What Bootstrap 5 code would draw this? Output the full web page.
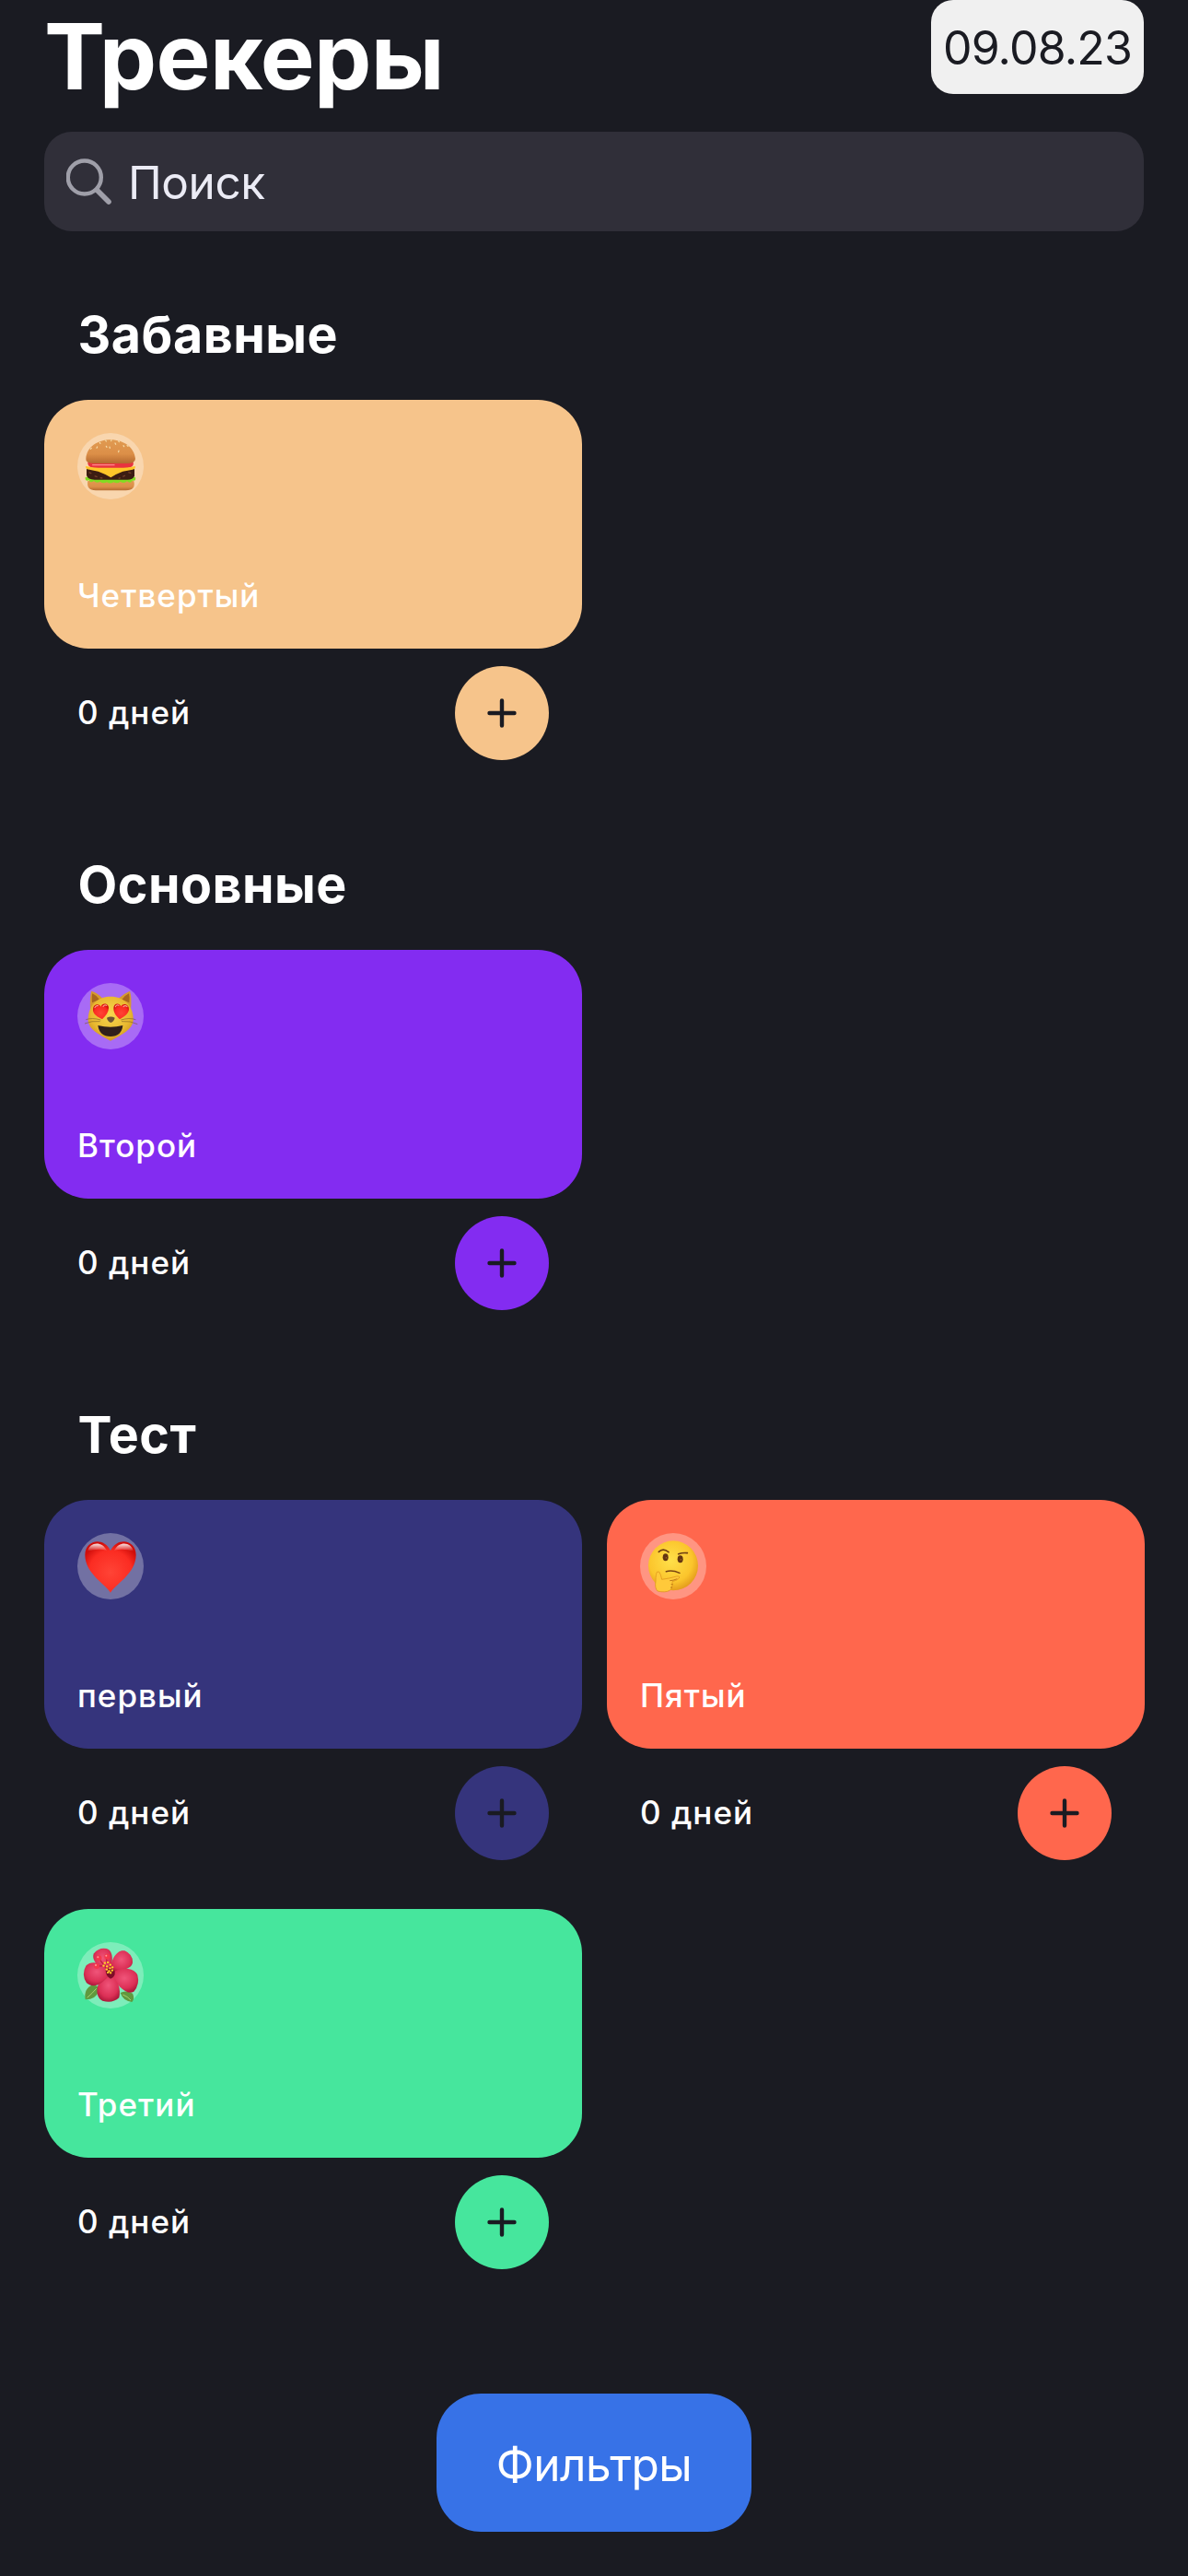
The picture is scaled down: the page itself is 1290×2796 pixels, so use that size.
<!DOCTYPE html>
<html lang="ru" data-bs-theme="dark">
<head>
<meta charset="utf-8">
<meta name="viewport" content="width=device-width, initial-scale=1">
<title>Трекеры</title>
<link href="https://cdn.jsdelivr.net/npm/bootstrap@5.3.0/dist/css/bootstrap.min.css" rel="stylesheet">
<style>
  body { background: #1a1b22; color: #fff; font-family: Inter, "Liberation Sans", sans-serif; }
  .screen { height: 2796px; padding: 0 47px 48px 48px; }
  .top-bar { height: 143px; }
  .page-title { font-size: 99px; line-height: 122px; font-weight: 700; letter-spacing: -.65px; }
  .date-pill { width: 231px; height: 102px; margin-right: 1px; border-radius: 24px; background: #f0f0f0; color: #1a1b22; font-size: 50px; letter-spacing: -.8px; padding-top: 2px; }
  .search-box { height: 108px; margin-right: 1px; border-radius: 30px; background: #302f39; color: #ebebf5; padding: 0 24px; font-size: 49.5px; letter-spacing: -.45px; }
  .search-box svg { width: 50px; height: 50px; }
  .search-box span { margin-left: 17px; padding-top: 2px; }
  .tracker-section { margin-top: 102px; }
  .search-box + .tracker-section { margin-top: 79px; }
  .section-title { font-size: 55.5px; line-height: 66px; font-weight: 700; letter-spacing: .5px; margin: 0 0 38px 36.5px; }
  .tracker-grid { --bs-gutter-x: 27px; --bs-gutter-y: 53px; }
  .tracker-tile { height: 270px; border-radius: 48px; padding: 36px 36px 31px; background: var(--tint); }
  .emoji { width: 72px; height: 72px; background: rgba(255,255,255,.3); }
  .emoji svg { width: 72px; height: 72px; display: block; }
  .tile-name, .day-count { font-size: 35px; line-height: 54px; font-weight: 500; letter-spacing: 1px; }
  .day-count { padding-bottom: 2px; }
  .tile-foot { margin-top: 19px; padding: 0 36px; }
  .plus-btn { width: 102px; height: 102px; background: var(--tint); color: #1a1b22; }
  .plus-btn svg { width: 34px; height: 34px; }
  .filter-btn { width: 342px; height: 150px; margin-right: 1px; border-radius: 48px; background: #3772e7; color: #fff; font-size: 49.5px; letter-spacing: -.5px; }
  .tint-sand { --tint: #f6c48b; }
  .tint-violet { --tint: #832cf1; }
  .tint-navy { --tint: #35347c; }
  .tint-coral { --tint: #ff674d; }
  .tint-mint { --tint: #46e69d; }
</style>
</head>
<body>
<svg width="0" height="0" class="position-absolute">
  <defs>
    <symbol id="plus" viewBox="0 0 34 34"><path d="M17 3.5v27M3.5 17h27" stroke="currentColor" stroke-width="4.4" stroke-linecap="round" fill="none"/></symbol>
    <linearGradient id="bun" x1="0" y1="0" x2="0" y2="1"><stop offset="0" stop-color="#e09a50"/><stop offset=".6" stop-color="#dc8f48"/><stop offset="1" stop-color="#b4692f"/></linearGradient>
    <radialGradient id="face" cx=".45" cy=".4" r=".62"><stop offset="0" stop-color="#ffe04a"/><stop offset=".7" stop-color="#fbc52c"/><stop offset="1" stop-color="#e39a1b"/></radialGradient>
    <radialGradient id="catface" cx=".5" cy=".4" r=".6"><stop offset="0" stop-color="#f7d84e"/><stop offset=".7" stop-color="#e9b930"/><stop offset="1" stop-color="#cf9720"/></radialGradient>
    <radialGradient id="red" cx=".5" cy=".6" r=".6"><stop offset="0" stop-color="#ff4436"/><stop offset=".7" stop-color="#fb2c22"/><stop offset="1" stop-color="#cf0d0a"/></radialGradient>
    <linearGradient id="shine" x1="0" y1="0" x2="0" y2="1"><stop offset="0" stop-color="#fff" stop-opacity=".9"/><stop offset="1" stop-color="#fff" stop-opacity="0"/></linearGradient>
    <radialGradient id="petal" cx=".5" cy=".4" r=".6"><stop offset="0" stop-color="#f0557a"/><stop offset=".7" stop-color="#dc3056"/><stop offset="1" stop-color="#b01a3c"/></radialGradient>
  </defs>
</svg>

<main class="screen d-flex flex-column">
  <header class="top-bar d-flex justify-content-between align-items-start">
    <h1 class="page-title mb-0">Трекеры</h1>
    <div class="date-pill d-flex align-items-center justify-content-center">09.08.23</div>
  </header>

  <div class="search-box d-flex align-items-center">
    <svg viewBox="0 0 50 50" fill="none" stroke="#9f9fa9" stroke-linecap="round"><circle cx="19.8" cy="20.5" r="18" stroke-width="4.4"/><path d="M33.5 34.5L46 47" stroke-width="5.6"/></svg>
    <span>Поиск</span>
  </div>

  <section class="tracker-section">
    <h2 class="section-title">Забавные</h2>
    <div class="row tracker-grid">
      <div class="col-6 tint-sand">
        <div class="tracker-tile d-flex flex-column justify-content-between">
          <div class="emoji rounded-circle">
            <svg viewBox="42 30 216 216">
              <path d="M76 186H226Q234 216 200 217H102Q70 216 76 186Z" fill="url(#bun)"/>
              <path d="M68 174Q150 160 231 174Q234 188 221 185Q214 196 204 187Q194 197 182 188Q172 197 160 190Q148 197 138 190Q126 196 116 188Q104 195 96 186Q84 194 80 184Q66 188 68 174Z" fill="#83dc22"/>
              <path d="M72 146H228V170Q222 184 200 182H98Q76 182 72 168Z" fill="#3c1d12"/>
              <path d="M80 158l8 4M98 170l9 3M190 172l8-4M208 158l9 3M116 176l8 1M176 178l6-2" stroke="#75402a" stroke-width="4"/>
              <path d="M76 124H224Q228 142 206 144H96Q74 142 76 124Z" fill="#e8343f"/><path d="M92 134h70" stroke="#ff8a8a" stroke-width="4" stroke-linecap="round"/>
              <path d="M70 138Q90 143 110 143H192Q212 143 230 138Q234 147 222 149L190 155Q170 162 151 175Q130 162 110 155L74 148Q66 142 70 138Z" fill="#ffc629"/>
              <path d="M70 114C72 76 108 52 150 52C194 52 228 78 231 114Q230 129 205 129H95Q68 128 70 114Z" fill="url(#bun)"/>
              <path d="M115 61l2 3M134 54l2 3M153 53l-1 3M176 56l2 3M107 75l-2 4M136 73l2 3M147 75l1 4M165 63l2 4M192 71l2 3M177 87l-1 5M88 79l-3 3M204 70l3 3" stroke="#f6dca8" stroke-width="3.6" stroke-linecap="round"/>
            </svg>
          </div>
          <div class="tile-name">Четвертый</div>
        </div>
        <div class="tile-foot d-flex justify-content-between align-items-center">
          <span class="day-count">0 дней</span>
          <button type="button" class="plus-btn btn border-0 rounded-circle p-0 d-flex align-items-center justify-content-center"><svg><use href="#plus"/></svg></button>
        </div>
      </div>
    </div>
  </section>

  <section class="tracker-section">
    <h2 class="section-title">Основные</h2>
    <div class="row tracker-grid">
      <div class="col-6 tint-violet">
        <div class="tracker-tile d-flex flex-column justify-content-between">
          <div class="emoji rounded-circle">
            <svg viewBox="42 36 216 216">
              <path d="M84 122Q82 80 88 62Q108 68 124 86H176Q194 70 213 62Q220 82 216 122Z" fill="#d59a30"/>
              <path d="M90 100Q88 80 91 70Q104 76 114 90ZM211 100Q213 82 210 70Q197 76 187 90Z" fill="#a8661f"/>
              <path d="M150 80C196 80 226 112 224 158C222 186 188 204 150 224C112 204 78 186 77 158C76 112 104 80 150 80Z" fill="url(#catface)"/>
              <path d="M109 174Q150 184 190 174Q186 210 150 210Q114 210 109 174Z" fill="#30201a"/>
              <path d="M138 149Q151 142 164 149Q162 160 151 165Q140 160 138 149Z" fill="#6e5434"/>
              <path d="M118 156Q90 148 70 155M116 161Q88 158 66 168M184 156Q212 148 232 155M186 161Q214 158 238 170" fill="none" stroke="#7c5c28" stroke-width="2.5" opacity=".75"/>
              <path d="M123 154C98 142 92 132 93 120C94 105 112 101 118 113C124 98 145 102 144 118C143 132 136 142 123 154Z" fill="url(#red)"/>
              <path d="M180 154C166 142 160 132 160 118C160 102 178 98 184 112C192 99 210 106 210 121C210 134 198 144 180 154Z" fill="url(#red)"/>
              <path d="M99 116q3-8 10-6M126 112q5-7 11-3M166 113q4-8 11-4M192 113q6-6 12 0" fill="none" stroke="#ff9e8e" stroke-width="3.5" stroke-linecap="round"/>
            </svg>
          </div>
          <div class="tile-name">Второй</div>
        </div>
        <div class="tile-foot d-flex justify-content-between align-items-center">
          <span class="day-count">0 дней</span>
          <button type="button" class="plus-btn btn border-0 rounded-circle p-0 d-flex align-items-center justify-content-center"><svg><use href="#plus"/></svg></button>
        </div>
      </div>
    </div>
  </section>

  <section class="tracker-section">
    <h2 class="section-title">Тест</h2>
    <div class="row tracker-grid">
      <div class="col-6 tint-navy">
        <div class="tracker-tile d-flex flex-column justify-content-between">
          <div class="emoji rounded-circle">
            <svg viewBox="42 27 216 216">
              <path d="M150 221C138 196 67 160 67 98C67 48 128 38 150 84C172 38 233 48 233 98C233 160 162 196 150 221Z" fill="url(#red)"/>
              <path d="M76 86C82 56 122 52 138 84Q110 76 76 86ZM162 84C178 52 218 56 224 86Q190 76 162 84Z" fill="url(#shine)"/>
            </svg>
          </div>
          <div class="tile-name">первый</div>
        </div>
        <div class="tile-foot d-flex justify-content-between align-items-center">
          <span class="day-count">0 дней</span>
          <button type="button" class="plus-btn btn border-0 rounded-circle p-0 d-flex align-items-center justify-content-center"><svg><use href="#plus"/></svg></button>
        </div>
      </div>
      <div class="col-6 tint-coral">
        <div class="tracker-tile d-flex flex-column justify-content-between">
          <div class="emoji rounded-circle">
            <svg viewBox="45 27 216 216">
              <circle cx="153" cy="133" r="81" fill="url(#face)"/>
              <path d="M106 88Q120 74 138 89" fill="none" stroke="#6e3d12" stroke-width="5" stroke-linecap="round"/>
              <path d="M170 95Q184 90 199 92" fill="none" stroke="#6e3d12" stroke-width="5" stroke-linecap="round"/>
              <ellipse cx="128" cy="106" rx="9" ry="12" fill="#633411"/><ellipse cx="176" cy="112" rx="9" ry="12" fill="#633411"/>
              <path d="M130 105v5M178 111v5" stroke="#a0652a" stroke-width="3"/>
              <path d="M130 152Q150 146 174 157" fill="none" stroke="#7a4512" stroke-width="4.5" stroke-linecap="round"/>
              <path d="M101 153Q108 149 112 163L116 178Q140 175 164 168Q176 166 172 174Q168 180 150 185Q152 206 142 214Q126 222 102 216Q92 206 96 184Q96 158 101 153Z" fill="#ffc93a" stroke="#d98e18" stroke-width="2"/>
              <path d="M142 182Q152 182 166 176M146 194h6M144 204h6" fill="none" stroke="#b06a12" stroke-width="2.5"/>
            </svg>
          </div>
          <div class="tile-name">Пятый</div>
        </div>
        <div class="tile-foot d-flex justify-content-between align-items-center">
          <span class="day-count">0 дней</span>
          <button type="button" class="plus-btn btn border-0 rounded-circle p-0 d-flex align-items-center justify-content-center"><svg><use href="#plus"/></svg></button>
        </div>
      </div>
      <div class="col-6 tint-mint">
        <div class="tracker-tile d-flex flex-column justify-content-between">
          <div class="emoji rounded-circle">
            <svg viewBox="42 39 216 216">
              <path d="M68 226Q62 190 92 178Q112 180 112 196Q104 226 68 226ZM182 204Q200 194 222 206Q230 222 220 234Q192 232 182 204Z" fill="#5f9a3e"/>
              <path d="M74 220Q90 206 104 190M190 210Q206 216 216 228" fill="none" stroke="#a9cf6e" stroke-width="3"/>
              <path d="M146 140C110 124 86 96 96 76Q112 56 136 60C162 66 158 108 146 140Z" fill="url(#petal)"/>
              <path d="M148 140C150 96 170 62 196 67Q222 78 222 104C220 130 180 128 148 140Z" fill="url(#petal)"/>
              <path d="M150 142C180 118 226 120 238 146Q246 176 226 200C200 214 170 178 150 142Z" fill="url(#petal)"/>
              <path d="M148 144C176 162 184 192 178 220Q156 240 124 230C98 220 96 162 148 144Z" fill="url(#petal)"/>
              <path d="M148 144C130 106 90 96 70 116Q54 144 72 172C98 194 128 170 148 144Z" fill="url(#petal)"/>
              <path d="M134 130Q150 118 164 134Q166 152 150 158Q134 150 134 130Z" fill="#7c0c28"/>
              <path d="M142 132L114 94M138 108L137 90M136 116L108 117" stroke="#c11f42" stroke-width="4"/>
              <circle cx="112" cy="91" r="9" fill="#f4384c"/><circle cx="139" cy="86" r="9" fill="#f4384c"/><circle cx="105" cy="117" r="9" fill="#f4384c"/>
              <circle cx="109" cy="88" r="3" fill="#ff9a9a"/><circle cx="136" cy="83" r="3" fill="#ff9a9a"/><circle cx="102" cy="114" r="3" fill="#ff9a9a"/>
              <path d="M131 107h1M141 105h1M149 113h1M127 116h1M138 118h1M148 124h1M156 121h1M137 128h1M145 133h1M155 131h1M150 139h1M141 138h1" stroke="#ffd02a" stroke-width="6.5" stroke-linecap="round"/>
            </svg>
          </div>
          <div class="tile-name">Третий</div>
        </div>
        <div class="tile-foot d-flex justify-content-between align-items-center">
          <span class="day-count">0 дней</span>
          <button type="button" class="plus-btn btn border-0 rounded-circle p-0 d-flex align-items-center justify-content-center"><svg><use href="#plus"/></svg></button>
        </div>
      </div>
    </div>
  </section>

  <button type="button" class="filter-btn btn border-0 px-0 pb-0 pt-1 mt-auto align-self-center">Фильтры</button>
</main>
<script src="https://cdn.jsdelivr.net/npm/bootstrap@5.3.0/dist/js/bootstrap.bundle.min.js"></script>
</body>
</html>
